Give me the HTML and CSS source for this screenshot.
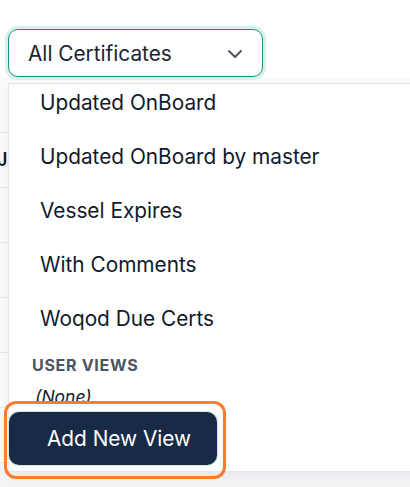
FILE: index.html
```html
<!DOCTYPE html>
<html lang="en">
  <head>
    <meta charset="UTF-8" />
    <title>Certificates</title>
    <link rel="stylesheet" href="styles.css">
  </head>
  <body>
    <div class="toolbar">
      <div class="filter">
        <button class="select">
          <span>All Certificates</span>
          <svg class="chevron" width="16" height="10" viewBox="0 0 16 10">
            <path d="M2 2l6 6 6-6" fill="none" stroke="#4b5563" stroke-width="2" stroke-linecap="round" stroke-linejoin="round" />
          </svg>
        </button>

        <div class="menu">
          <div class="menu-scroll">
            <ul class="views">
              <li>Updated OnBoard</li>
              <li>Updated OnBoard by master</li>
              <li>Vessel Expires</li>
              <li>With Comments</li>
              <li>Woqod Due Certs</li>
            </ul>
            <div class="section-title">USER VIEWS</div>
            <div class="empty">(None)</div>
          </div>
          <div class="menu-footer">
            <button class="add-view">Add New View</button>
          </div>
        </div>
      </div>
    </div>

    <!-- table rows behind the dropdown -->
    <div class="table">
      <div class="row"></div>
      <div class="row"><span class="cell">J</span></div>
      <div class="row"></div>
      <div class="row"></div>
      <div class="row"></div>
      <div class="row"></div>
      <div class="row"></div>
    </div>
  </body>
</html>
```

FILE: styles.css
```css
*,
*::before,
*::after {
  margin: 0;
  padding: 0;
  box-sizing: border-box;
}

body {
  width: 410px;
  height: 487px;
  overflow: hidden;
  background: #f3f4f6;
  font-family: "Inter", "Noto Sans", sans-serif;
  color: #111a2c;
}

.toolbar {
  height: 78px;
  padding: 29px 0 0 8px;
  background: #ffffff;
  position: relative;
  z-index: 2;
}

.filter {
  position: relative;
  width: 255px;
}

.select {
  width: 255px;
  height: 48px;
  display: flex;
  align-items: center;
  justify-content: space-between;
  padding: 0 19px 0 19px;
  background: #ffffff;
  border: 1.5px solid #14937f;
  border-radius: 10px;
  box-shadow: 0 0 0 3px #d9f0ea;
  font-family: inherit;
  font-size: 20.8px;
  color: #1c2434;
}

.chevron {
  margin-top: 2px;
}

/* dropdown panel */
.menu {
  position: absolute;
  top: 54px;
  left: 0;
  width: 420px;
  height: 389px;
  display: flex;
  flex-direction: column;
  background: #ffffff;
  border: 1px solid #e5e7eb;
  box-shadow: 0 4px 10px rgba(17, 24, 39, 0.05);
}

.menu-scroll {
  flex: 1;
  overflow: hidden;
}

.views {
  list-style: none;
  margin-top: -8px;
}

.views li {
  height: 54px;
  padding: 15px 0 0 31px;
  font-size: 20.8px;
  line-height: 24px;
}

.section-title {
  padding: 9px 0 0 23px;
  font-size: 16px;
  font-weight: 700;
  letter-spacing: 0.7px;
  color: #4b5563;
  line-height: 20px;
}

.empty {
  padding: 11px 0 0 26px;
  font-size: 17.5px;
  font-style: italic;
  line-height: 22px;
}

.menu-footer {
  position: relative;
  height: 70px;
  padding-top: 11px;
  background: #ffffff;
}

/* highlight ring around the footer */
.menu-footer::after {
  content: "";
  position: absolute;
  left: -5px;
  top: 0;
  width: 222px;
  height: 78px;
  border: 3px solid #fb7d2c;
  border-radius: 12px;
}

.add-view {
  width: 208px;
  height: 53px;
  padding-left: 38px;
  text-align: left;
  background: #172a46;
  border: none;
  border-radius: 10px;
  box-shadow: 0 0 0 1px #cfe9e4;
  font-family: inherit;
  font-size: 20.8px;
  color: #ffffff;
}

/* table behind */
.table {
  background: #f8f9fb;
}

.row {
  height: 55px;
  border-bottom: 1px solid #e5e7eb;
  padding: 16px 0 0 0;
}

.cell {
  display: block;
  margin-left: -3px;
  font-size: 18px;
  font-weight: 600;
  color: #111a2c;
}
```
